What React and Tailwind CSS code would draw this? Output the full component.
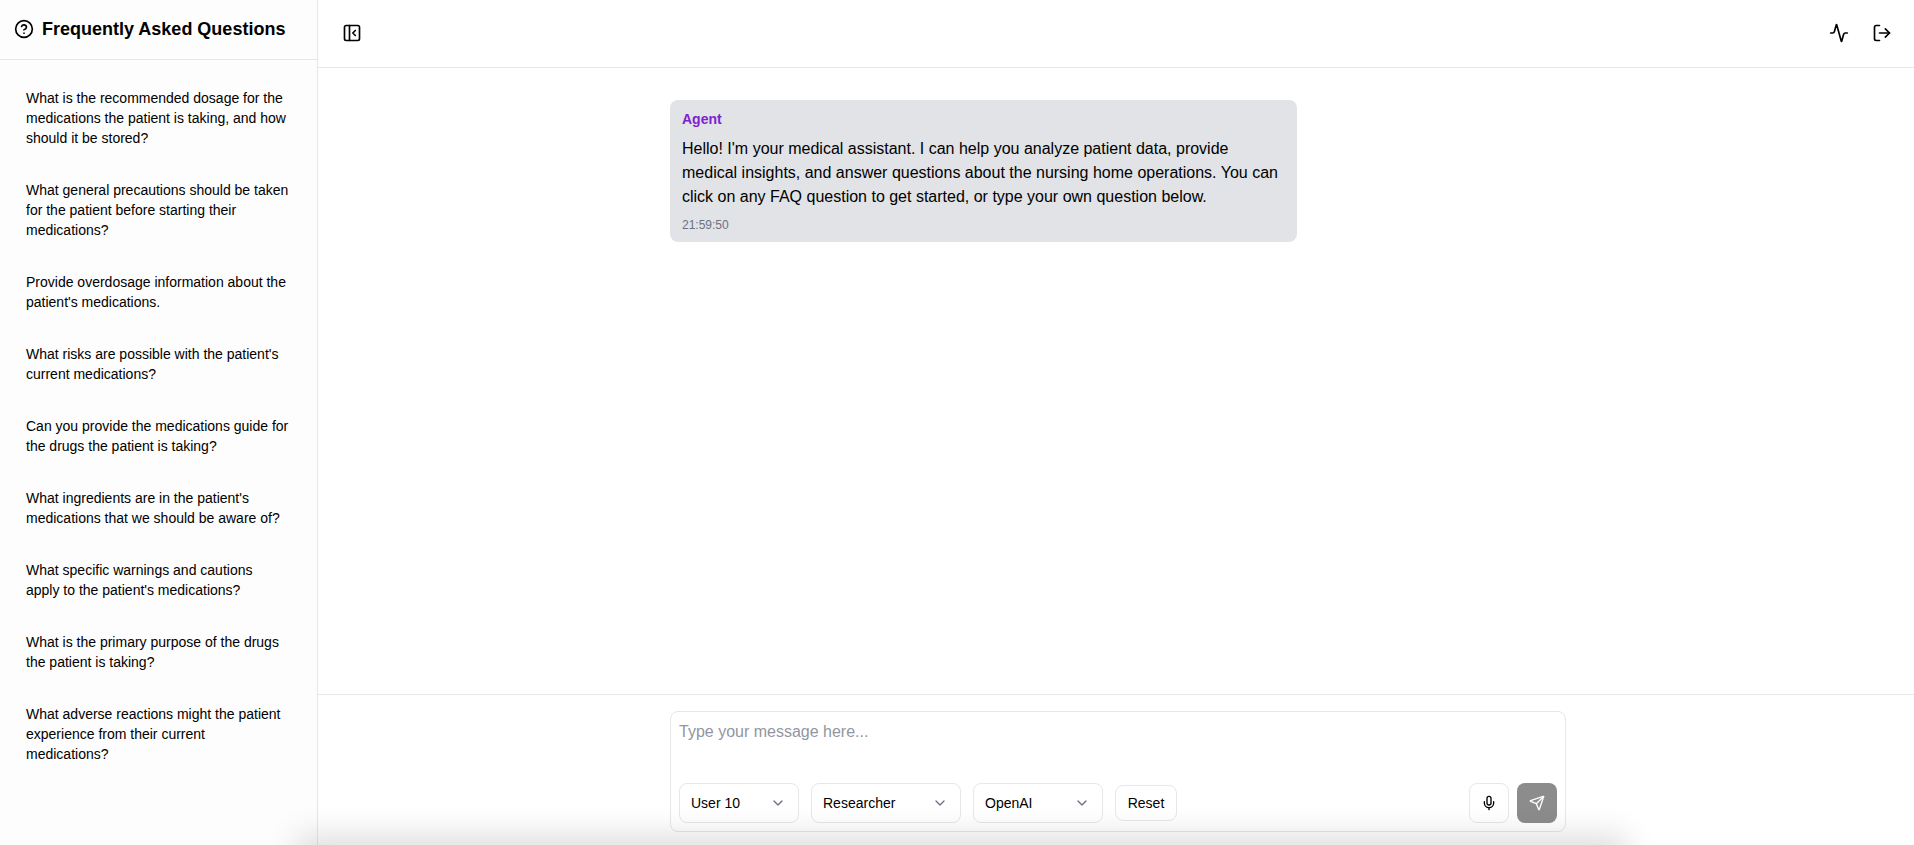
import { Activity, ChevronDown, CircleHelp, LogOut, Mic, PanelLeftClose, Send } from 'lucide-react';

const FAQS = [
  'What is the recommended dosage for the medications the patient is taking, and how should it be stored?',
  'What general precautions should be taken for the patient before starting their medications?',
  "Provide overdosage information about the patient's medications.",
  "What risks are possible with the patient's current medications?",
  'Can you provide the medications guide for the drugs the patient is taking?',
  "What ingredients are in the patient's medications that we should be aware of?",
  "What specific warnings and cautions apply to the patient's medications?",
  'What is the primary purpose of the drugs the patient is taking?',
  'What adverse reactions might the patient experience from their current medications?',
];

function Dropdown({ label, width }) {
  return (
    <button className={`flex h-10 items-center justify-between rounded-lg border border-gray-200 bg-white pl-[11px] pr-3 text-sm text-black ${width}`}>
      <span>{label}</span>
      <ChevronDown size={16} className="text-gray-500" />
    </button>
  );
}

export default function App() {
  return (
    <div className="relative flex h-screen w-full overflow-hidden bg-white font-['Liberation_Sans',Arial,sans-serif] text-black">
      <aside className="flex w-[318px] shrink-0 flex-col border-r border-gray-200 bg-[#fdfdfd]">
        <div className="flex h-[60px] items-center gap-2 border-b border-gray-200 px-[14px] pb-[2px]">
          <CircleHelp size={20} strokeWidth={2} />
          <h2 className="text-lg font-bold">Frequently Asked Questions</h2>
        </div>
        <div className="flex flex-col gap-2 pl-[14px] pr-[16px] pt-[16px]">
          {FAQS.map((q) => (
            <button key={q} className="rounded-md px-3 py-3 text-left text-sm leading-5">
              {q}
            </button>
          ))}
        </div>
      </aside>

      <main className="flex min-w-0 flex-1 flex-col">
        <header className="flex h-[68px] shrink-0 items-center justify-between border-b border-gray-200 pb-[2px] pl-[24px] pr-[22px]">
          <button aria-label="Toggle sidebar">
            <PanelLeftClose size={20} />
          </button>
          <div className="flex items-center gap-[23px]">
            <Activity size={20} />
            <LogOut size={20} />
          </div>
        </header>

        <div className="flex-1 pl-[4px] pt-[32px]">
          <div className="mx-auto w-[896px]">
            <div className="w-[627px] rounded-lg bg-[#e1e3e7] px-3 pb-[9px] pt-[9px]">
              <div className="text-sm font-semibold text-[#7e22ce]">Agent</div>
              <p className="mt-[8px] text-base leading-6">
                Hello! I'm your medical assistant. I can help you analyze patient data, provide medical insights, and answer questions about the nursing home operations. You can click on any FAQ question to get started, or type your own question below.
              </p>
              <div className="mt-[8px] text-xs text-gray-500">21:59:50</div>
            </div>
          </div>
        </div>

        <div className="h-[151px] shrink-0 border-t border-gray-200 pl-[4px] pt-[16px]">
          <div className="mx-auto flex h-[121px] w-[896px] flex-col rounded-lg border border-gray-200 bg-white p-2">
            <textarea
              rows={1}
              placeholder="Type your message here..."
              className="flex-1 resize-none bg-transparent text-base leading-6 outline-none placeholder:text-[#9096a2]"
            />
            <div className="flex items-center justify-between">
              <div className="flex items-center gap-3">
                <Dropdown label="User 10" width="w-[120px]" />
                <Dropdown label="Researcher" width="w-[150px]" />
                <Dropdown label="OpenAI" width="w-[130px]" />
                <button className="h-9 w-[62px] rounded-lg border border-gray-200 bg-white text-sm">Reset</button>
              </div>
              <div className="flex items-center gap-2">
                <button aria-label="Voice input" className="flex h-10 w-10 items-center justify-center rounded-lg border border-gray-200 bg-white">
                  <Mic size={16} />
                </button>
                <button aria-label="Send" className="flex h-10 w-10 items-center justify-center rounded-lg bg-[#8c8c8c] text-white">
                  <Send size={16} />
                </button>
              </div>
            </div>
          </div>
        </div>
      </main>

      {/* soft shadow creeping in from under the bottom edge */}
      <div className="pointer-events-none absolute bottom-[-24px] left-[304px] right-[294px] h-[24px] shadow-[0_-2px_32px_7px_rgba(0,0,0,0.14)]" />
    </div>
  );
}
